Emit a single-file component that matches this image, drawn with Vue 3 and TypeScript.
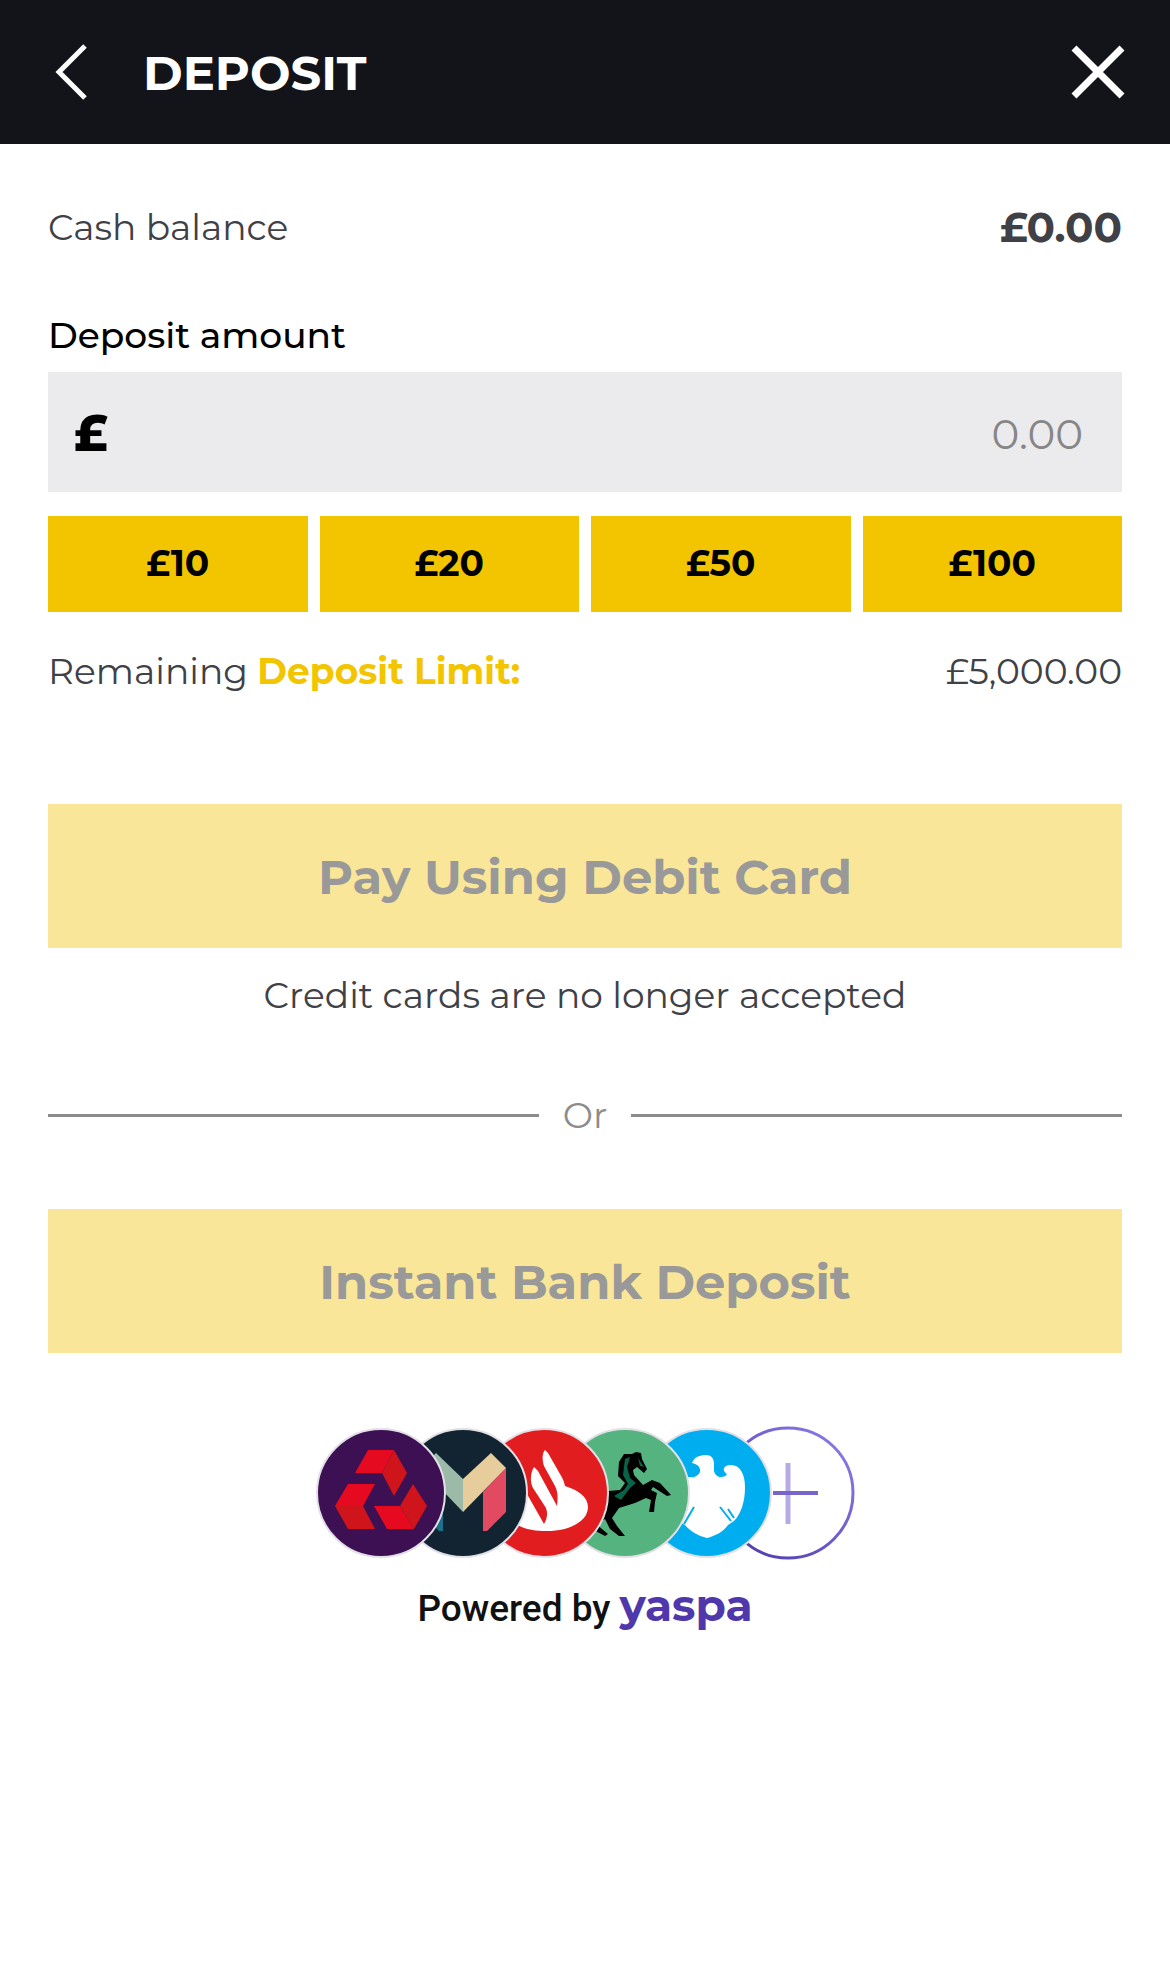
<script setup lang="ts">
import { ref } from 'vue'

const amount = ref('')
const presets: number[] = [10, 20, 50, 100]

function choose(value: number): void {
  amount.value = value.toFixed(2)
}
</script>

<template>
  <div class="page">
    <header class="bar">
      <button class="icon-btn" type="button" aria-label="Back">
        <svg width="32" height="60" viewBox="0 0 32 60" fill="none" stroke="#fff" stroke-width="5">
          <path d="M30 4 4 30 30 56" />
        </svg>
      </button>
      <h1>DEPOSIT</h1>
      <button class="icon-btn close" type="button" aria-label="Close">
        <svg width="54" height="54" viewBox="0 0 54 54" fill="none" stroke="#fff" stroke-width="7">
          <path d="M3 3 51 51M51 3 3 51" />
        </svg>
      </button>
    </header>

    <main>
      <div class="row">
        <span>Cash balance</span>
        <strong class="balance">£0.00</strong>
      </div>

      <section class="amount">
        <label for="amount">Deposit amount</label>
        <div class="field">
          <span class="currency">£</span>
          <input id="amount" v-model="amount" type="text" inputmode="decimal" placeholder="0.00" />
        </div>
        <div class="presets">
          <button v-for="value in presets" :key="value" type="button" @click="choose(value)">£{{ value }}</button>
        </div>
      </section>

      <div class="row limit">
        <span>Remaining <a href="#">Deposit Limit:</a></span>
        <span>£5,000.00</span>
      </div>

      <button class="pay" type="button" disabled>Pay Using Debit Card</button>
      <p class="note">Credit cards are no longer accepted</p>

      <div class="divider"><span>Or</span></div>

      <button class="pay" type="button" disabled>Instant Bank Deposit</button>

      <figure class="banks">
        <svg width="550" height="146" viewBox="0 0 550 146" role="img" aria-label="Supported banks">
          <defs>
            <linearGradient id="ring" x1="0" y1="1" x2="1" y2="0">
              <stop offset="0" stop-color="#4a36a8" />
              <stop offset="1" stop-color="#8f80ea" />
            </linearGradient>
          </defs>
          <g>
            <circle cx="478" cy="73" r="65" fill="#fff" stroke="url(#ring)" stroke-width="3" />
            <path d="M478 43V104" stroke="#b5aae4" stroke-width="5" />
            <path d="M463 73H508" stroke="#7765cb" stroke-width="4" />
          </g>
          <g>
            <circle class="disc" cx="397" cy="73" r="64" fill="#00aef0" />
            <path fill="#fff" d="M382 43C384 37 390 35 396 35C401 35 404 38 404 44V51C405 55 408 57 411 57C414 57 416 56 417 54C411 50 414 45 421 45C430 45 435 54 435 67C435 82 431 94 424 101L418 105C413 112 405 116 397 118C388 116 380 111 375 105L366 100V57H380C384 58 388 56 390 52C391 47 387 44 382 43Z" />
            <path d="M384 87 374 104M410 87 421 101M418 89 424 98" fill="none" stroke="#00aef0" stroke-width="2" />
          </g>
          <g>
            <circle class="disc" cx="315" cy="73" r="64" fill="#55b380" />
            <path d="M314 34 322 34 326 32 331 33 332 39 337 49 334 53 327 47 323 50 324 55 333 65 342 60 350 63 361 75 357 76 343 67 341 70 347 73 345 82 344 92 339 92 341 80 336 78 325 83 309 88 302 98 307 106 315 116 309 116 300 109 295 99 286 104 298 114 295 116 280 108 286 86 298 71 310 70 315 63 308 56 309 42Z" />
            <path fill="#086448" d="M315 39 320 37 317 47 320 58 326 63 320 68 311 80 304 76 314 70 318 64 313 55ZM328 38 334 47 330 46Z" />
          </g>
          <g>
            <circle class="disc" cx="234" cy="73" r="64" fill="#e21d1f" />
            <path fill="#fff" d="M235 30C232 33 232 40 234 46L245 66C248 72 248 78 247 86L228 51 224 47C220 54 220 62 223 68L236 88C238 94 237 99 234 104L217 74 200 80V100C212 110 225 111 237 111C260 111 278 101 278 87C278 77 268 70 255 66C254 61 252 57 250 54L238 33Z" />
          </g>
          <g>
            <circle class="disc" cx="153" cy="73" r="64" fill="#122431" />
            <path fill="#1a7288" d="M111 48V92L129 111H133V72Z" />
            <path fill="#9bbba8" d="M126 33 153 59V92L111 48Z" />
            <path fill="#e24a62" d="M196 48V92L177 111H173V72Z" />
            <path fill="#e6cd9b" d="M153 59 181 33 196 48 153 92Z" />
          </g>
          <g>
            <circle class="disc" cx="71" cy="73" r="64" fill="#3c1053" />
            <path fill="#e60a20" d="M58 30H84L72 53H45ZM38 64H65L53 86H25ZM64 86H90L104 109H77Z" />
            <path fill="#cf141b" d="M84 30 97 53 84 76 72 53ZM25 86H53L65 109H38ZM90 86 103 64 117 86 104 109Z" />
          </g>
        </svg>
        <figcaption>Powered by <b>yaspa</b></figcaption>
      </figure>
    </main>
  </div>
</template>

<style>
body {
  margin: 0;
  background: #fff;
}
</style>

<style scoped>
.page {
  font-family: Montserrat, Inter, sans-serif;
  font-size: 36px;
  font-weight: 400;
  line-height: 48px;
  color: #404146;
}

button,
input {
  box-sizing: border-box;
  margin: 0;
  padding: 0;
  border: 0;
  border-radius: 0;
  font: inherit;
}

.bar {
  display: flex;
  align-items: center;
  box-sizing: border-box;
  height: 144px;
  padding: 0 45px 0 55px;
  background: #13141a;
  color: #fff;
}

.icon-btn {
  display: flex;
  background: none;
}

.close {
  margin-left: auto;
}

h1 {
  margin: 0 0 0 56px;
  padding-top: 2px;
  font-size: 48px;
  font-weight: 700;
}

main {
  padding: 59px 48px;
}

.row {
  display: flex;
  justify-content: space-between;
}

.balance {
  font-size: 42px;
  font-weight: 700;
}

.amount {
  margin: 60px 0 35px;
}

label {
  display: block;
  margin-bottom: 13px;
  color: #000;
  font-weight: 500;
}

.field {
  display: flex;
  align-items: center;
  height: 120px;
  padding: 4px 39px 0 26px;
  box-sizing: border-box;
  background: #ebebed;
}

.currency {
  color: #000;
  font-size: 50px;
  font-weight: 800;
}

.field input {
  flex: 1;
  min-width: 0;
  height: 100%;
  background: none;
  outline: none;
  color: #000;
  font-size: 42px;
  text-align: right;
}

.field input::placeholder {
  color: #868686;
  opacity: 1;
}

.presets {
  display: grid;
  grid-template-columns: repeat(4, 1fr);
  gap: 12px;
  margin-top: 24px;
}

.presets button {
  height: 96px;
  padding-bottom: 2px;
  background: #f2c500;
  color: #000;
  font-weight: 700;
}

.limit {
  margin-bottom: 109px;
}

.limit a {
  color: #f2c500;
  font-weight: 700;
  text-decoration: none;
}

.pay {
  display: block;
  width: 100%;
  height: 144px;
  padding-top: 2px;
  background: #fae698;
  color: #999;
  font-size: 48px;
  font-weight: 700;
}

.note {
  margin: 23px 0 72px;
  text-align: center;
}

.divider {
  display: flex;
  align-items: center;
  gap: 24px;
  margin-bottom: 70px;
  color: #8c8c8c;
}

.divider::before,
.divider::after {
  content: '';
  flex: 1;
  height: 3px;
  background: #8c8c8c;
}

.banks {
  display: flex;
  flex-direction: column;
  align-items: center;
  margin: 67px 0 0;
}

.banks svg {
  display: block;
  max-width: 100%;
}

.disc {
  stroke: #e2dfe6;
  stroke-width: 2;
}

figcaption {
  margin-top: 15px;
  color: #111;
  font-family: Roboto, sans-serif;
  font-size: 37px;
  font-weight: 500;
}

figcaption b {
  color: #4f38ab;
  font-family: Montserrat, Inter, sans-serif;
  font-size: 44px;
  font-weight: 700;
}
</style>
